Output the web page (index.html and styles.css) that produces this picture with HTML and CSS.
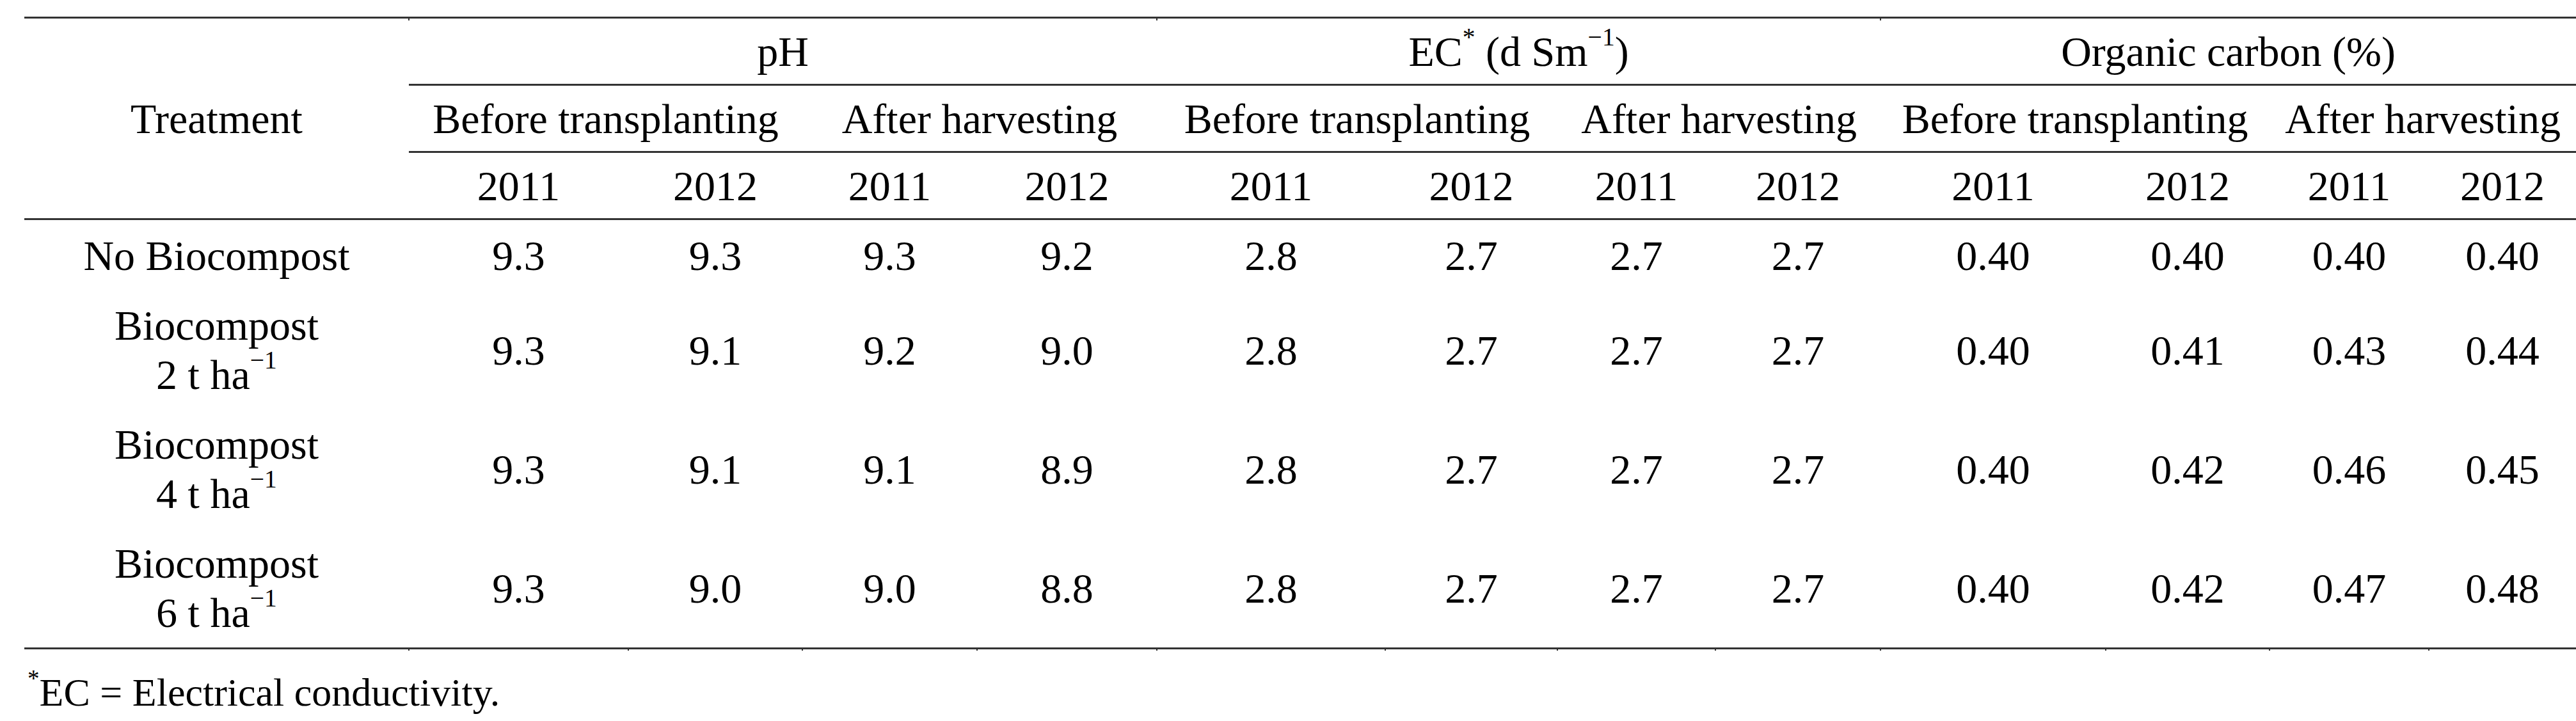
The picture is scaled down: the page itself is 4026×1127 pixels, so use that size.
FILE: index.html
```html
<!DOCTYPE html>
<html lang="en">
<head>
<meta charset="utf-8">
<title>Soil properties table</title>
<link rel="stylesheet" href="styles.css">
</head>
<body>
<div class="page">
  <table class="data">
    <colgroup>
      <col class="c-treat">
      <col class="c1"><col class="c2"><col class="c3"><col class="c4">
      <col class="c5"><col class="c6"><col class="c7"><col class="c8">
      <col class="c9"><col class="c10"><col class="c11"><col class="c12">
    </colgroup>
    <thead>
      <tr class="hrow">
        <th class="treat" rowspan="3">Treatment</th>
        <th class="grp" colspan="4">pH</th>
        <th class="grp" colspan="4">EC<sup class="sup">*</sup> (d Sm<sup class="sup">−1</sup>)</th>
        <th class="grp" colspan="4">Organic carbon (%)</th>
      </tr>
      <tr class="hrow">
        <th class="sub" colspan="2">Before transplanting</th>
        <th class="sub" colspan="2">After harvesting</th>
        <th class="sub" colspan="2">Before transplanting</th>
        <th class="sub" colspan="2">After harvesting</th>
        <th class="sub" colspan="2">Before transplanting</th>
        <th class="sub" colspan="2">After harvesting</th>
      </tr>
      <tr class="hrow">
        <th class="yr">2011</th><th class="yr">2012</th><th class="yr">2011</th><th class="yr">2012</th>
        <th class="yr">2011</th><th class="yr">2012</th><th class="yr">2011</th><th class="yr">2012</th>
        <th class="yr">2011</th><th class="yr">2012</th><th class="yr">2011</th><th class="yr">2012</th>
      </tr>
    </thead>
    <tbody>
      <tr class="row-single">
        <td>No Biocompost</td>
        <td>9.3</td><td>9.3</td><td>9.3</td><td>9.2</td>
        <td>2.8</td><td>2.7</td><td>2.7</td><td>2.7</td>
        <td>0.40</td><td>0.40</td><td>0.40</td><td>0.40</td>
      </tr>
      <tr class="row-double">
        <td>Biocompost<br>2 t ha<sup class="sup">−1</sup></td>
        <td>9.3</td><td>9.1</td><td>9.2</td><td>9.0</td>
        <td>2.8</td><td>2.7</td><td>2.7</td><td>2.7</td>
        <td>0.40</td><td>0.41</td><td>0.43</td><td>0.44</td>
      </tr>
      <tr class="row-double">
        <td>Biocompost<br>4 t ha<sup class="sup">−1</sup></td>
        <td>9.3</td><td>9.1</td><td>9.1</td><td>8.9</td>
        <td>2.8</td><td>2.7</td><td>2.7</td><td>2.7</td>
        <td>0.40</td><td>0.42</td><td>0.46</td><td>0.45</td>
      </tr>
      <tr class="row-double row-last">
        <td>Biocompost<br>6 t ha<sup class="sup">−1</sup></td>
        <td>9.3</td><td>9.0</td><td>9.0</td><td>8.8</td>
        <td>2.8</td><td>2.7</td><td>2.7</td><td>2.7</td>
        <td>0.40</td><td>0.42</td><td>0.47</td><td>0.48</td>
      </tr>
    </tbody>
  </table>
  <p class="note"><sup class="sup">*</sup>EC = Electrical conductivity.</p>
</div>
</body>
</html>
```
FILE: styles.css
```css
html, body {
  margin: 0;
  padding: 0;
  background: #ffffff;
}

body {
  font-family: "Liberation Serif", "Times New Roman", serif;
  font-size: 66px;
  line-height: 77px;
  color: #000000;
}

.page {
  padding: 26px 0 0 38px;
}

.data {
  border-collapse: separate;
  border-spacing: 0;
  table-layout: fixed;
  width: 3988px;
  border-top: 3px solid #333333;
  border-bottom: 3px solid #333333;
}

.c-treat { width: 601px; }
.c1 { width: 343px; }
.c2 { width: 272px; }
.c3 { width: 273px; }
.c4 { width: 281px; }
.c5 { width: 357px; }
.c6 { width: 269px; }
.c7 { width: 247px; }
.c8 { width: 258px; }
.c9 { width: 352px; }
.c10 { width: 256px; }
.c11 { width: 249px; }
.c12 { width: 230px; }

.data th,
.data td {
  font-weight: normal;
  text-align: center;
  vertical-align: middle;
  padding: 0;
  box-sizing: border-box;
  white-space: nowrap;
}

.hrow { height: 105px; }

.grp,
.sub,
.yr,
.treat {
  border-bottom: 3px solid #333333;
}

.grp {
  position: relative;
  padding-top: 6px;
}

.grp::before {
  content: "";
  position: absolute;
  left: -1px;
  top: 0;
  width: 2px;
  height: 3px;
  background: #333333;
}

.row-single { height: 110px; }
.row-double { height: 186px; }

.row-last td {
  position: relative;
}

.row-last td + td::after {
  content: "";
  position: absolute;
  left: -1px;
  bottom: -5px;
  width: 2px;
  height: 5px;
  background: #333333;
}

.sup {
  font-size: 0.6em;
  line-height: 0;
  vertical-align: 0.8em;
}

.note {
  margin: 29px 0 0 5px;
  font-size: 62px;
}
```
